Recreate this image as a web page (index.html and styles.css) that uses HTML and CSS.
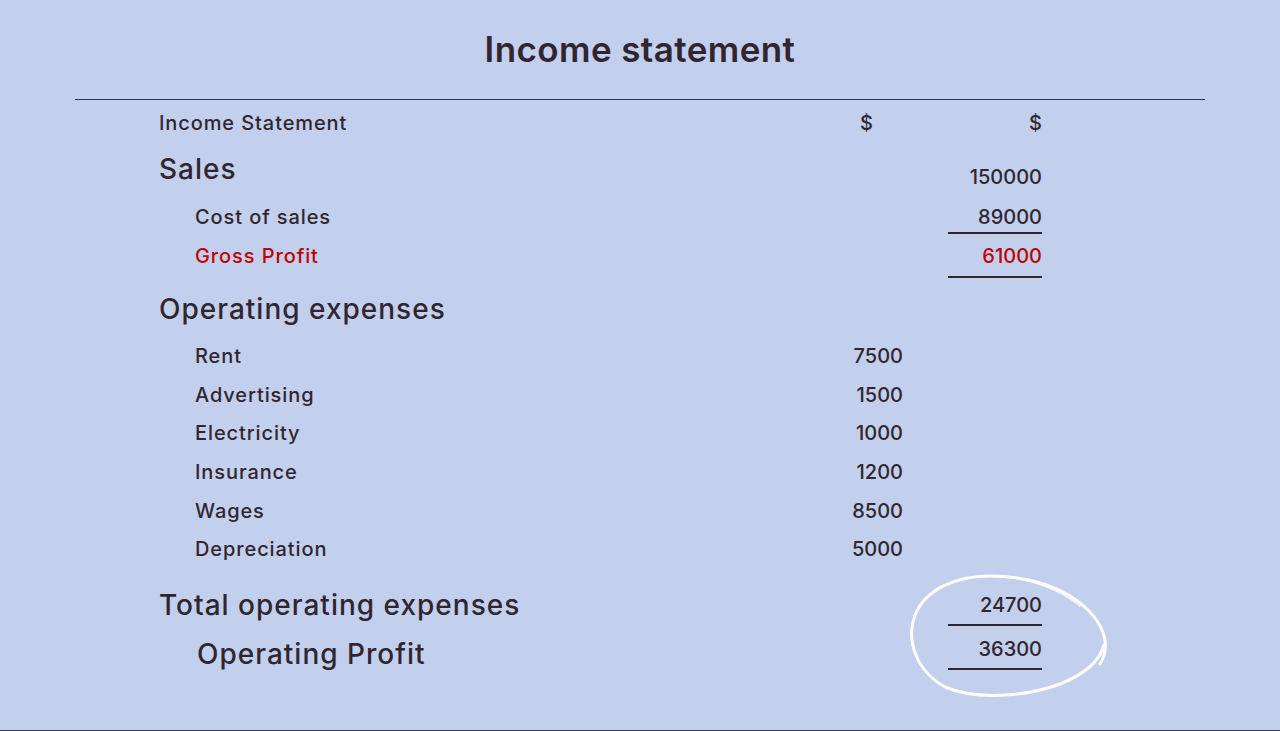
FILE: index.html
```html
<!DOCTYPE html>
<html>
<head>
  <link rel="stylesheet" href="styles.css">
</head>
<body>
  <h1 class="title">Income statement</h1>
  <hr class="rule">

  <div class="sheet">
    <div class="row head">
      <div class="label">Income Statement</div>
      <div class="num dollar">$</div>
      <div class="num">$</div>
    </div>

    <div class="row section sales">
      <div class="label">Sales</div>
      <div class="num"></div>
      <div class="num low">150000</div>
    </div>
    <div class="row item cost">
      <div class="label">Cost of sales</div>
      <div class="num"></div>
      <div class="num under">89000</div>
    </div>
    <div class="row item gross">
      <div class="label">Gross Profit</div>
      <div class="num"></div>
      <div class="num under">61000</div>
    </div>

    <div class="row section opex">
      <div class="label">Operating expenses</div>
    </div>
    <div class="row item exp first">
      <div class="label">Rent</div>
      <div class="num">7500</div>
    </div>
    <div class="row item exp">
      <div class="label">Advertising</div>
      <div class="num">1500</div>
    </div>
    <div class="row item exp">
      <div class="label">Electricity</div>
      <div class="num">1000</div>
    </div>
    <div class="row item exp">
      <div class="label">Insurance</div>
      <div class="num">1200</div>
    </div>
    <div class="row item exp">
      <div class="label">Wages</div>
      <div class="num">8500</div>
    </div>
    <div class="row item exp">
      <div class="label">Depreciation</div>
      <div class="num">5000</div>
    </div>

    <div class="row section total">
      <div class="label">Total operating expenses</div>
      <div class="num"></div>
      <div class="num under">24700</div>
    </div>
    <div class="row section profit">
      <div class="label">Operating Profit</div>
      <div class="num"></div>
      <div class="num under high">36300</div>
    </div>
  </div>

  <!-- hand drawn circle round the result -->
  <svg class="scribble" width="1280" height="731" viewBox="0 0 1280 731">
    <path d="M1100 664 C1110 648 1106 628 1088 610 C1066 588 1030 576 990 576 C955 576 925 590 915 615 C905 642 918 672 945 687 C975 700 1025 697 1060 684 C1085 674 1100 660 1104 645"
          fill="none" stroke="#fff" stroke-width="3" stroke-linecap="round"/>
    <path d="M1000 577 C1030 578 1060 590 1080 606" fill="none" stroke="#fff" stroke-width="1.5" stroke-linecap="round" opacity="0.8"/>
  </svg>
</body>
</html>
```

FILE: styles.css
```css
* {
  box-sizing: border-box;
}
body {
  font-family: Inter, "Open Sans", sans-serif;
  margin: 0;
  min-height: 100vh;
  background-color: #c2d0ed;
  color: #312630;
  border-bottom: 1px solid #3d4152;
  position: relative;
  overflow: hidden;
}
.title {
  margin: 0;
  padding-top: 27px;
  height: 70px;
  line-height: 44px;
  font-size: 35px;
  font-weight: 600;
  text-align: center;
  letter-spacing: 0.4px;
}
.rule {
  margin: 29px 75px 0;
  border: none;
  border-top: 1.5px solid #3b3340;
}
.sheet {
  margin-left: 159px;
  width: 883px;
}
.row {
  display: grid;
  grid-template-columns: 1fr 100px 94px;
  column-gap: 45px;
  align-items: center;
  height: 38px;
  font-size: 20px;
  font-weight: 500;
  line-height: 24px;
  letter-spacing: 0.9px;
}
.num {
  text-align: right;
  letter-spacing: 0;
}
.head {
  height: 40px;
  margin-top: 3px;
}
.dollar {
  padding-right: 30px;
}
.section {
  height: 44px;
  font-size: 28px;
  line-height: 32px;
  letter-spacing: 1px;
}
.section .num {
  font-size: 20px;
  line-height: 24px;
  letter-spacing: 0;
}
.item .label {
  padding-left: 36px;
}
.sales {
  margin-top: 4px;
}
.low {
  padding-top: 16px;
}
.cost {
  margin-top: 5px;
}
.gross {
  color: #c00000;
}
.under {
  padding: 7px 0;
  border-top: 2px solid transparent;
  border-bottom: 2px solid #312630;
}
.cost .under {
  padding-bottom: 3px;
  margin-bottom: 4px;
}
.gross .under {
  padding-bottom: 8px;
  margin-top: 1px;
}
.opex {
  margin-top: 15px;
}
.exp {
  height: 38.6px;
}
.exp.first {
  margin-top: 6px;
}
.total {
  margin-top: 14px;
}
.profit {
  margin-top: 5px;
}
.profit .label {
  padding-left: 38px;
  font-size: 28px;
}
.high {
  margin-top: -10px;
}
.scribble {
  position: absolute;
  left: 0;
  top: 0;
  pointer-events: none;
}
```
